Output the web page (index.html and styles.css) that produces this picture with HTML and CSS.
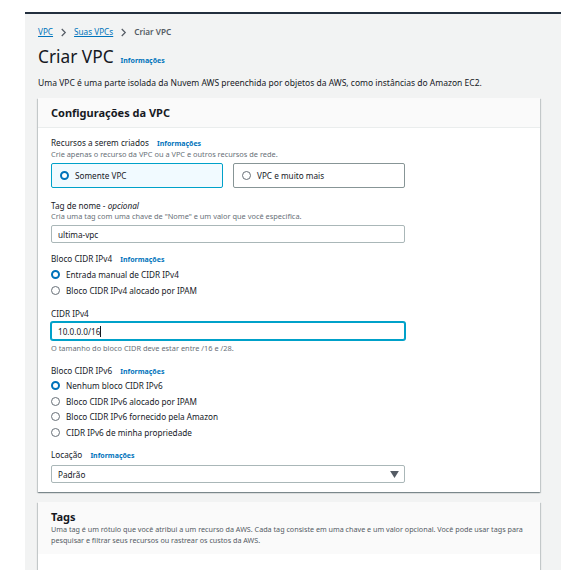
FILE: index.html
```html
<!DOCTYPE html>
<html lang="pt-BR">
<head>
<meta charset="utf-8">
<link rel="stylesheet" href="styles.css">
</head>
<body>
<div class="page">
  <nav class="crumbs">
    <a class="crumb-link">VPC</a>
    <svg class="chev" viewBox="0 0 8 10" width="7" height="9"><path d="M2 1l4 4-4 4" fill="none" stroke="#545b64" stroke-width="1.4"/></svg>
    <a class="crumb-link">Suas VPCs</a>
    <svg class="chev" viewBox="0 0 8 10" width="7" height="9"><path d="M2 1l4 4-4 4" fill="none" stroke="#545b64" stroke-width="1.4"/></svg>
    <span class="crumb-cur">Criar VPC</span>
  </nav>
  <div class="title-row">
    <h1 class="title">Criar VPC</h1>
    <span class="info">Informações</span>
  </div>
  <p class="lead">Uma VPC é uma parte isolada da Nuvem AWS preenchida por objetos da AWS, como instâncias do Amazon EC2.</p>

  <section class="panel">
    <div class="panel-head"><h2 class="panel-title">Configurações da VPC</h2></div>
    <div class="panel-body">
      <div class="field field-first">
        <div class="label">Recursos a serem criados <span class="info">Informações</span></div>
        <div class="hint">Crie apenas o recurso da VPC ou a VPC e outros recursos de rede.</div>
        <div class="tiles">
          <div class="tile tile-on"><span class="radio radio-on"></span>Somente VPC</div>
          <div class="tile"><span class="radio"></span>VPC e muito mais</div>
        </div>
      </div>

      <div class="field">
        <div class="label">Tag de nome - <i>opcional</i></div>
        <div class="hint">Cria uma tag com uma chave de "Nome" e um valor que você especifica.</div>
        <div class="input">ultima-vpc</div>
      </div>

      <div class="field">
        <div class="label">Bloco CIDR IPv4 <span class="info">Informações</span></div>
        <div class="opts">
          <div class="opt"><span class="radio radio-on"></span>Entrada manual de CIDR IPv4</div>
          <div class="opt"><span class="radio"></span>Bloco CIDR IPv4 alocado por IPAM</div>
        </div>
      </div>

      <div class="field field-cidr">
        <div class="label">CIDR IPv4</div>
        <div class="input input-focus">10.0.0.0/16<span class="caret"></span></div>
        <div class="hint hint-after">O tamanho do bloco CIDR deve estar entre /16 e /28.</div>
      </div>

      <div class="field field-v6">
        <div class="label">Bloco CIDR IPv6 <span class="info">Informações</span></div>
        <div class="opts opts-v6">
          <div class="opt"><span class="radio radio-on"></span>Nenhum bloco CIDR IPv6</div>
          <div class="opt"><span class="radio"></span>Bloco CIDR IPv6 alocado por IPAM</div>
          <div class="opt"><span class="radio"></span>Bloco CIDR IPv6 fornecido pela Amazon</div>
          <div class="opt"><span class="radio"></span>CIDR IPv6 de minha propriedade</div>
        </div>
      </div>

      <div class="field field-last">
        <div class="label">Locação <span class="info">Informações</span></div>
        <div class="input select">Padrão<svg class="tri" viewBox="0 0 10 8" width="9" height="7"><path d="M0 0h10L5 8z" fill="#545b64"/></svg></div>
      </div>
    </div>
  </section>

  <section class="panel panel-tags">
    <div class="panel-head tags-head">
      <h2 class="panel-title">Tags</h2>
      <p class="tags-desc">Uma tag é um rótulo que você atribui a um recurso da AWS. Cada tag consiste em uma chave e um valor opcional. Você pode usar tags para pesquisar e filtrar seus recursos ou rastrear os custos da AWS.</p>
    </div>
    <div class="panel-body tags-body"></div>
  </section>
</div>
</body>
</html>
```

FILE: styles.css
```css
html, body {
  margin: 0;
  padding: 0;
  background: #ffffff;
  height: 570px;
  overflow: hidden;
}
body {
  font-family: "Noto Sans", "Open Sans", sans-serif;
  color: #16191f;
  padding-top: 12px;
  box-sizing: border-box;
}
.page {
  margin-left: 25px;
  width: 536px;
  height: 558px;
  overflow: hidden;
  box-sizing: border-box;
  border-top: 2px solid #232f3e;
  background: #f2f3f3;
  padding: 12px 21px 0 13px;
}
.crumbs {
  display: flex;
  align-items: center;
  gap: 4px;
  font-size: 8.2px;
  line-height: 12px;
}
.crumb-link {
  color: #0073bb;
  text-decoration: underline;
}
.chev { margin: 0 3px; }
.crumb-cur { color: #545b64; font-weight: 600; }
.title-row {
  display: flex;
  align-items: baseline;
  gap: 7px;
  margin-top: 8px;
}
.title {
  margin: 0;
  font-size: 17.3px;
  font-weight: 400;
  line-height: 22px;
}
.info {
  color: #0073bb;
  font-size: 7px;
  font-weight: 700;
  margin-left: 6px;
}
.title-row .info { margin-left: 0; }
.lead {
  margin: 9px 0 0;
  font-size: 8.5px;
  line-height: 12px;
}
.panel {
  margin-top: 9px;
  background: #fff;
  box-shadow: 0 1px 1px rgba(0,28,36,0.3), 1px 1px 1px rgba(0,28,36,0.15), -1px 1px 1px rgba(0,28,36,0.15);
}
.panel-head {
  background: #fafafa;
  border-bottom: 1px solid #eaeded;
  padding: 6px 13px 6px;
}
.panel-title {
  margin: 0;
  font-size: 11px;
  font-weight: 700;
  line-height: 17px;
}
.panel-body {
  padding: 9px 13px 9px;
}
.field { margin-bottom: 10px; }
.field-first { margin-bottom: 12px; }
.field-cidr { margin-bottom: 12px; }
.field-v6 { margin-bottom: 9px; }
.field-last { margin-bottom: 0; }
.label {
  font-size: 8.2px;
  line-height: 11px;
}
.hint {
  font-size: 7.4px;
  line-height: 10px;
  color: #687078;
}
.hint-after { margin-top: 3px; }
.tiles {
  display: flex;
  gap: 10px;
  margin-top: 4px;
}
.tile {
  box-sizing: border-box;
  width: 172px;
  height: 25px;
  border: 1px solid #879596;
  border-radius: 2px;
  display: flex;
  align-items: center;
  padding-left: 8px;
  font-size: 8.2px;
}
.tile-on {
  background: #f1faff;
  border-color: #00a1c9;
}
.radio {
  box-sizing: border-box;
  width: 9px;
  height: 9px;
  border-radius: 50%;
  border: 1px solid #687078;
  background: #fff;
  margin-right: 6px;
  flex: none;
}
.radio-on {
  border: 2.5px solid #0073bb;
}
.input {
  box-sizing: border-box;
  width: 354px;
  height: 18px;
  margin-top: 4px;
  border: 1px solid #aab7b8;
  border-radius: 2px;
  background: #fff;
  display: flex;
  align-items: center;
  padding-left: 6px;
  font-size: 8.2px;
}
.input-focus {
  border-color: #00a1c9;
  box-shadow: 0 0 0 1px #00a1c9;
  height: 18px;
  margin-top: 3px;
}
.caret {
  display: inline-block;
  width: 1px;
  height: 11px;
  background: #16191f;
}
.select {
  justify-content: space-between;
  padding-right: 5px;
  height: 18px;
  margin-top: 4px;
}
.opts {
  display: flex;
  flex-direction: column;
  margin-top: 2px;
}
.opts-v6 { margin-top: 1px; }
.opt {
  display: flex;
  align-items: center;
  font-size: 8.2px;
  line-height: 15.5px;
}
.panel-tags { margin-top: 10px; }
.tags-head { padding: 7px 13px 8px; border-bottom: none; }
.tags-head .panel-title { line-height: 15px; }
.tags-desc {
  margin: 0;
  font-size: 7.2px;
  line-height: 11px;
  color: #545b64;
}
.tags-body { height: 30px; }
```
